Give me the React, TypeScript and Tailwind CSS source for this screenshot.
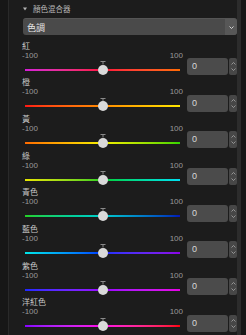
const rows = [
  { label: '紅', track: 'bg-linear-to-r from-[#d61cd6] via-[#ff0a3a] to-[#ff6a00]' },
  { label: '橙', track: 'bg-linear-to-r from-[#ff1414] via-[#ff8a00] to-[#ffe600]' },
  { label: '黃', track: 'bg-linear-to-r from-[#ff6a00] via-[#f2ee00] to-[#2ed400]' },
  { label: '綠', track: 'bg-linear-to-r from-[#e6e600] via-[#10d020] to-[#00e0f0]' },
  { label: '青色', track: 'bg-linear-to-r from-[#24d020] via-[#00cccc] to-[#0a14b8]' },
  { label: '藍色', track: 'bg-linear-to-r from-[#00e6e6] via-[#1430ff] to-[#8a00e6]' },
  { label: '紫色', track: 'bg-linear-to-r from-[#1e28ff] via-[#9a00ff] to-[#e600e6]' },
  { label: '洋紅色', track: 'bg-linear-to-r from-[#8a00ff] via-[#ff00e6] to-[#ff0000]' }
]

const cjk = 'font-["Noto_Sans_CJK_TC","Noto_Sans_CJK_SC",sans-serif]'
const num = 'font-["Liberation_Sans",Arial,sans-serif]'

function Chevron({ up }: { up?: boolean }) {
  return (
    <svg width="5" height="3" viewBox="0 0 5 3" className="block">
      <path d={up ? 'M0.5 2.5 L2.5 0.5 L4.5 2.5' : 'M0.5 0.5 L2.5 2.5 L4.5 0.5'} stroke="#a8a8a8" strokeWidth="0.8" fill="none" />
    </svg>
  )
}

function MixerRow({ label, track }: { label: string; track: string }) {
  return (
    <div className="flex h-[36.7px] flex-col">
      <div className={`h-[10px] text-[8px] leading-[10px] text-[#c8c8c8] ${cjk}`}>{label}</div>
      <div className="flex">
        <div className="w-[162px]">
          <div className={`flex h-[9px] items-center justify-between pr-[1px] text-[8px] leading-[9px] text-[#9a9a9a] ${num}`}>
            <span>-100</span>
            <span>100</span>
          </div>
          <div className="relative ml-[3px] flex h-[20px] w-[155px] items-center">
            <div className={`h-[2px] w-full ${track}`} />
            <svg width="6" height="4" viewBox="0 0 6 4" className="absolute left-[74.5px] top-[1.5px]">
              <path d="M0.5 0.5 H5.5 M3 0.5 V3.5" stroke="#8a8a8a" strokeWidth="1" fill="none" />
            </svg>
            <div className="absolute left-[72.5px] top-[5px] h-[10px] w-[10px] rounded-full bg-[#d9d9d9]" />
          </div>
        </div>
        <div className="ml-[3px] mt-[7.5px] flex h-[17px] w-[41px] items-center rounded-[3px] bg-[#4b4b4b] pl-[5px]">
          <span className={`text-[9px] leading-none text-[#d8d8d8] ${num}`}>0</span>
        </div>
        <div className="ml-[1px] mt-[7.5px] flex h-[17px] w-[8px] flex-col items-center justify-center gap-[3px] rounded-[2px] bg-[#474747]">
          <Chevron up />
          <Chevron />
        </div>
      </div>
    </div>
  )
}

export default function App() {
  return (
    <div className="flex h-[335px] w-[246px] overflow-hidden bg-[#1c1c1c]">
      <div className="w-[9px] border-r border-[#2a2a2a] bg-[#171717]" />
      <div className="flex-1 pl-[13px]">
        <div className="flex h-[18px] items-center pl-[1px]">
          <svg width="4" height="4" viewBox="0 0 4 4" className="block">
            <path d="M0 0.5 H4 L2 3.5 Z" fill="#b4b4b4" />
          </svg>
          <span className={`ml-[6px] text-[7.5px] leading-none text-[#b8b8b8] ${cjk}`}>顏色混合器</span>
        </div>
        <div className="ml-[1px] flex h-[17px] items-stretch overflow-hidden rounded-[3px] border-t border-[#555] bg-[#4a4a4a]">
          <span className={`flex flex-1 items-center pl-[4px] text-[9px] leading-none text-[#e6e6e6] ${cjk}`}>色調</span>
          <div className="flex w-[12px] items-center justify-center bg-[#575757]">
            <svg width="5" height="3" viewBox="0 0 5 3" className="block">
              <path d="M0.5 0.5 L2.5 2.5 L4.5 0.5" stroke="#e0e0e0" strokeWidth="0.9" fill="none" />
            </svg>
          </div>
        </div>
        <div className="mt-[5.5px]">
          {rows.map((row) => (
            <MixerRow key={row.label} label={row.label} track={row.track} />
          ))}
        </div>
      </div>
      <div className="w-[4px] bg-[#2c2c2c]" />
      <div className="w-[5px] bg-[#171717]" />
    </div>
  )
}
